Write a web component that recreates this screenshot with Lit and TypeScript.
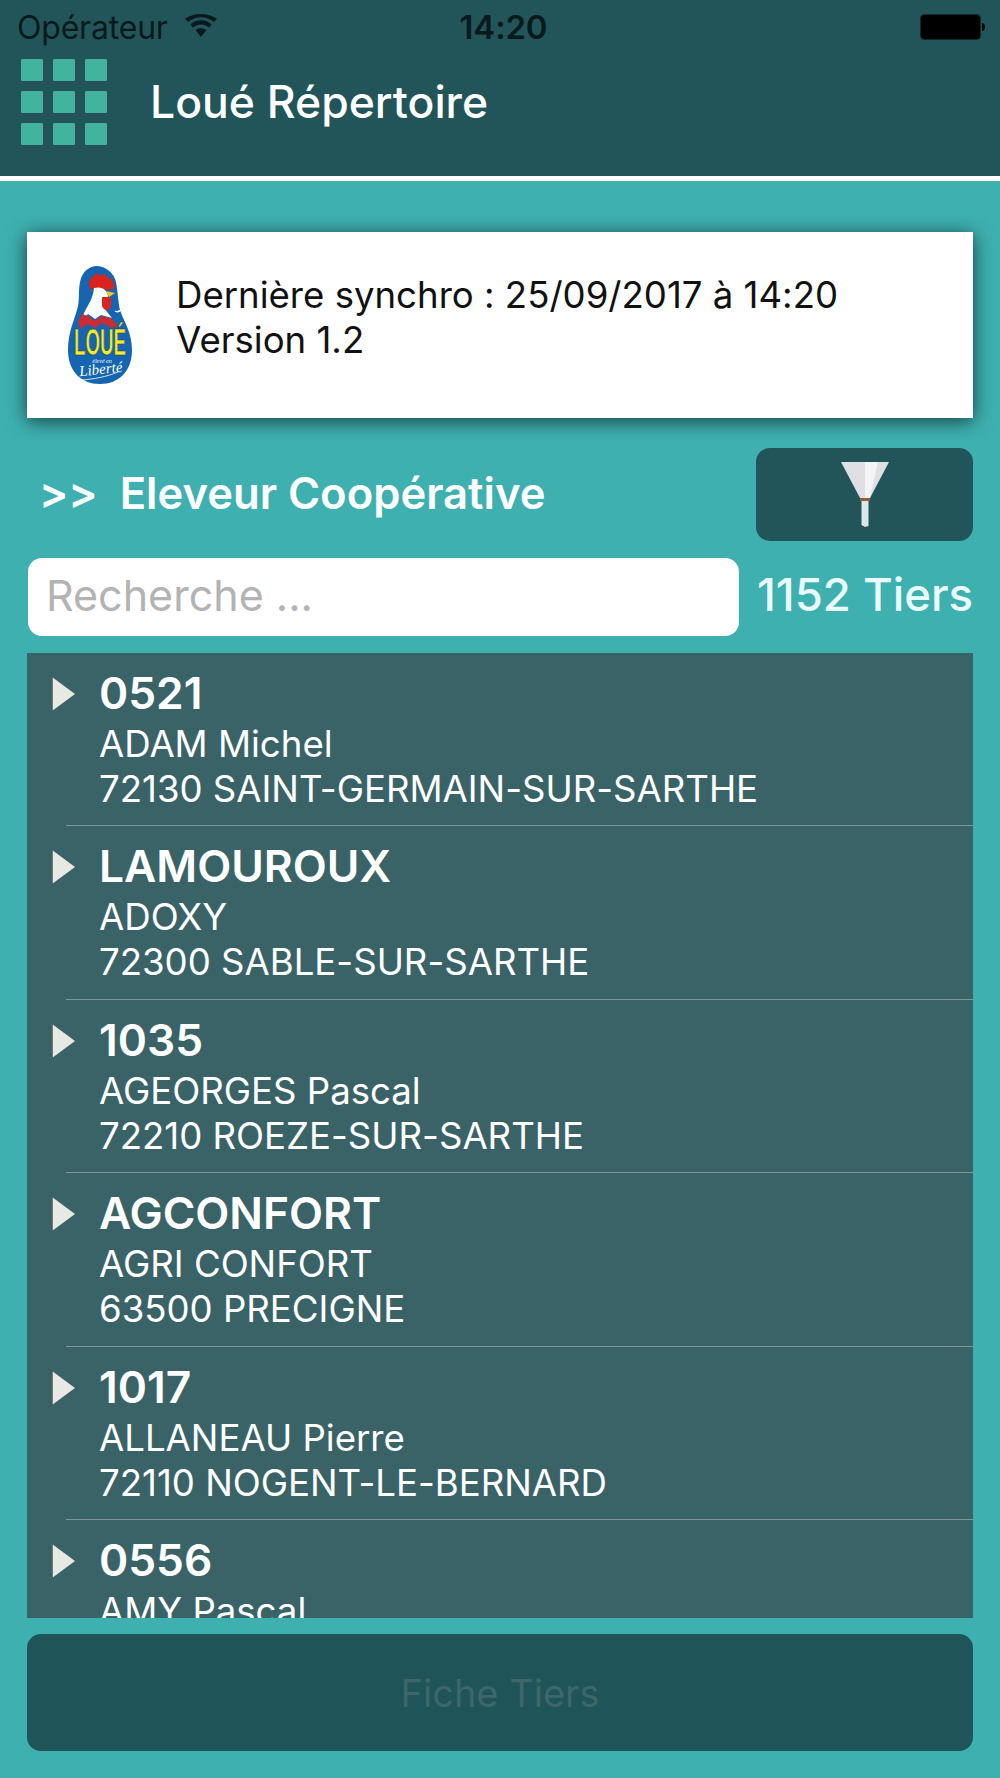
import { LitElement, html, css, svg } from "lit";
import { customElement } from "lit/decorators.js";

const ROWS: string[][] = [
  ["0521", "ADAM Michel", "72130 SAINT-GERMAIN-SUR-SARTHE"],
  ["LAMOUROUX", "ADOXY", "72300 SABLE-SUR-SARTHE"],
  ["1035", "AGEORGES Pascal", "72210 ROEZE-SUR-SARTHE"],
  ["AGCONFORT", "AGRI CONFORT", "63500 PRECIGNE"],
  ["1017", "ALLANEAU Pierre", "72110 NOGENT-LE-BERNARD"],
  ["0556", "AMY Pascal"],
];

const logo = svg`<svg class="logo" viewBox="0 0 64 118" aria-hidden="true">
  <path d="M28 0C19 1 14 7 12 16C10 27 12 34 9 44C7 52 0 66 0 84C0 105 13 118 32 118C51 118 64 105 64 84C64 66 55 54 52 44C50 35 50 27 48 16C46 7 38 0 28 0Z" fill="#1565b0"/>
  <path d="M22 23C20 15 22 10 25 12C26 7 30 6 32 10C35 7 39 8 40 12C44 12 47 16 46 23L38 24L30 22Z" fill="#d9231f"/>
  <path d="M26 22C33 20 39 23 40 30L36 42L44 52L33 49L27 53L20 48L14 54C15 44 25 36 26 22Z" fill="#fff"/>
  <path d="M38 25L47 27L41 31Z" fill="#f0c91c"/>
  <path d="M34 31H43V41C41 45 36 45 34 40Z" fill="#d9231f"/>
  <path d="M10 56L14 48L20 50L27 55L33 50L43 52L50 60L44 62L34 57L27 62L20 58L13 63Z" fill="#c92d33"/>
  <path d="M47 45C50 47 52 45 54 43" stroke="#fff" stroke-width="1.4" fill="none"/>
  <text class="logo-word" transform="translate(32 89) scale(0.52 1)">LOUÉ</text>
  <text x="34" y="97" class="logo-small">élevé en</text>
  <text x="33" y="108" class="logo-script" transform="rotate(-6 33 106)">Liberté</text>
  <path d="M14 114C26 113 38 111 50 106" stroke="#fff" stroke-width="0.8" fill="none"/>
</svg>`;

@customElement("app-root")
export class AppRoot extends LitElement {
  static styles = css`
    :host {
      display: flex;
      flex-direction: column;
      width: 1000px;
      height: 1778px;
      background: #3eb0b0;
      font-family: Inter, "Liberation Sans", sans-serif;
      font-feature-settings: "calt" 0;
      overflow: hidden;
    }
    .top {
      height: 176px;
      background: #215559;
      flex: none;
    }
    .status {
      height: 54px;
      display: grid;
      grid-template-columns: 1fr auto 1fr;
      align-items: center;
      padding: 0 15px 0 17px;
      color: #0a1a1c;
      font-size: 32px;
      letter-spacing: -0.2px;
    }
    .carrier { display: flex; align-items: center; gap: 17px; }
    .wifi { width: 32px; height: 23px; margin-top: -4px; }
    .time { font-size: 33px; font-weight: 600; margin-left: 5px; }
    .battery { justify-self: end; width: 65px; height: 26px; display: block; }
    .bar {
      display: flex;
      align-items: flex-start;
      gap: 43px;
      padding: 5px 0 0 21px;
    }
    .apps {
      display: grid;
      grid-template-columns: repeat(3, 22px);
      grid-auto-rows: 22px;
      gap: 10px;
    }
    .apps i { background: #41b39e; border-radius: 1px; }
    .title {
      color: #fff;
      font-size: 44.5px;
      font-weight: 500;
      line-height: 62px;
      margin-top: 12px;
    }
    .rule { height: 5px; background: #fff; flex: none; }
    .main {
      flex: 1;
      min-height: 0;
      display: flex;
      flex-direction: column;
      padding: 51px 27px 27px;
    }
    .card {
      height: 186px;
      flex: none;
      background: #fff;
      box-shadow: 0 3px 18px rgba(0, 0, 0, 0.65);
      display: flex;
      align-items: center;
      gap: 44px;
      padding-left: 41px;
      color: #111;
      font-size: 36.6px;
      line-height: 45px;
    }
    .card-text { margin-top: -14px; }
    .logo { width: 64px; height: 118px; flex: none; }
    .logo-word {
      font: 700 36px "Liberation Sans", sans-serif;
      fill: #f4ea2a;
      stroke: #12305c;
      stroke-width: 0.6px;
      text-anchor: middle;
    }
    .logo-small { font: italic 6px "Liberation Serif", serif; fill: #fff; text-anchor: middle; }
    .logo-script { font: italic 15px "Liberation Serif", serif; fill: #fff; text-anchor: middle; }
    .mode {
      display: flex;
      align-items: center;
      justify-content: space-between;
      margin-top: 30px;
      height: 93px;
      flex: none;
    }
    .mode-label {
      display: flex;
      gap: 22px;
      padding: 0 0 2px 12px;
      color: #fff;
      font-size: 43.6px;
      font-weight: 600;
    }
    .filter {
      width: 217px;
      height: 93px;
      background: #215559;
      border-radius: 14px;
      display: flex;
      align-items: center;
      justify-content: center;
    }
    .funnel { width: 50px; height: 66px; }
    .search-row {
      display: flex;
      align-items: center;
      justify-content: space-between;
      margin-top: 17px;
      flex: none;
    }
    .search {
      width: 711px;
      height: 78px;
      margin-left: 1px;
      box-sizing: border-box;
      background: #fff;
      border-radius: 14px;
      padding: 0 0 4px 18px;
      display: flex;
      align-items: center;
      color: #b3b3b3;
      font-size: 43px;
    }
    .count { color: #e9fbfb; font-size: 45.5px; font-weight: 550; padding-bottom: 5px; }
    .list {
      margin-top: 17px;
      flex: 1;
      min-height: 0;
      overflow: hidden;
      background: #3a6368;
      color: #fff;
    }
    .row {
      height: 173.4px;
      box-sizing: border-box;
      display: flex;
      flex-direction: column;
    }
    .body {
      flex: 1;
      min-height: 0;
      display: flex;
      gap: 24px;
      padding: 15px 0 0 25px;
    }
    .sep { height: 1px; flex: none; margin-left: 39px; background: #7f9799; }
    .tri { width: 23px; height: 34px; flex: none; margin-top: 9px; }
    .name { font-size: 44.3px; font-weight: 600; line-height: 50px; margin-bottom: 4px; }
    .line { font-size: 36.6px; line-height: 45px; white-space: nowrap; }
    .action {
      flex: none;
      margin-top: 16px;
      height: 117px;
      border-radius: 14px;
      background: #1f5458;
      color: #3d676a;
      font-size: 38px;
      display: flex;
      align-items: center;
      justify-content: center;
    }
  `;

  render() {
    return html`
      <div class="top">
        <div class="status">
          <div class="carrier">
            <span>Opérateur</span>
            <svg class="wifi" viewBox="0 0 32 23" aria-hidden="true">
              <path d="M16 23L10.5 16C13.5 13.5 18.5 13.5 21.5 16Z" fill="#0a1a1c"/>
              <path d="M8 13.5C12.5 9.5 19.5 9.5 24 13.5L26.6 10.4C20.5 5 11.5 5 5.4 10.4Z" fill="#0a1a1c"/>
              <path d="M3 8C10.5 1.5 21.5 1.5 29 8L32 4.8C23 -1.6 9 -1.6 0 4.8Z" fill="#0a1a1c"/>
            </svg>
          </div>
          <span class="time">14:20</span>
          <svg class="battery" viewBox="0 0 65 26" aria-hidden="true">
            <rect x="0.5" y="0.5" width="60" height="25" rx="4" fill="#000" stroke="#10292c"/>
            <path d="M62 9C64 9 65 11 65 13C65 15 64 17 62 17Z" fill="#000"/>
          </svg>
        </div>
        <div class="bar">
          <div class="apps">${Array.from({ length: 9 }, () => html`<i></i>`)}</div>
          <div class="title">Loué Répertoire</div>
        </div>
      </div>
      <div class="rule"></div>
      <div class="main">
        <div class="card">
          ${logo}
          <div class="card-text">Dernière synchro : 25/09/2017 à 14:20<br />Version 1.2</div>
        </div>
        <div class="mode">
          <div class="mode-label"><span>&gt;&gt;</span><span>Eleveur Coopérative</span></div>
          <div class="filter">
            <svg class="funnel" viewBox="0 0 50 66" aria-hidden="true">
              <path d="M1 0H49L30 36H20Z" fill="#dfdfe4"/>
              <path d="M25 0H38L30 36H25Z" fill="#f4f4f6"/>
              <rect x="20" y="36" width="10" height="3" fill="#9a5a3c"/>
              <path d="M21.5 39H28.5V64L25 65L21.5 63Z" fill="#dde6e6"/>
            </svg>
          </div>
        </div>
        <div class="search-row">
          <div class="search">Recherche ...</div>
          <div class="count">1152 Tiers</div>
        </div>
        <div class="list">
          ${ROWS.map(
            (r, i) => html`<div class="row">
              <div class="body">
                <svg class="tri" viewBox="0 0 23 34" aria-hidden="true">
                  <path d="M0 0L23 17L0 34Z" fill="#e9e9e3"/>
                  <path d="M0 0V34" stroke="#1f2f32" stroke-width="1.2"/>
                </svg>
                <div>
                  <div class="name">${r[0]}</div>
                  ${r.slice(1).map((t) => html`<div class="line">${t}</div>`)}
                </div>
              </div>
              ${i < ROWS.length - 1 ? html`<div class="sep"></div>` : ""}
            </div>`
          )}
        </div>
        <div class="action">Fiche Tiers</div>
      </div>
    `;
  }
}
